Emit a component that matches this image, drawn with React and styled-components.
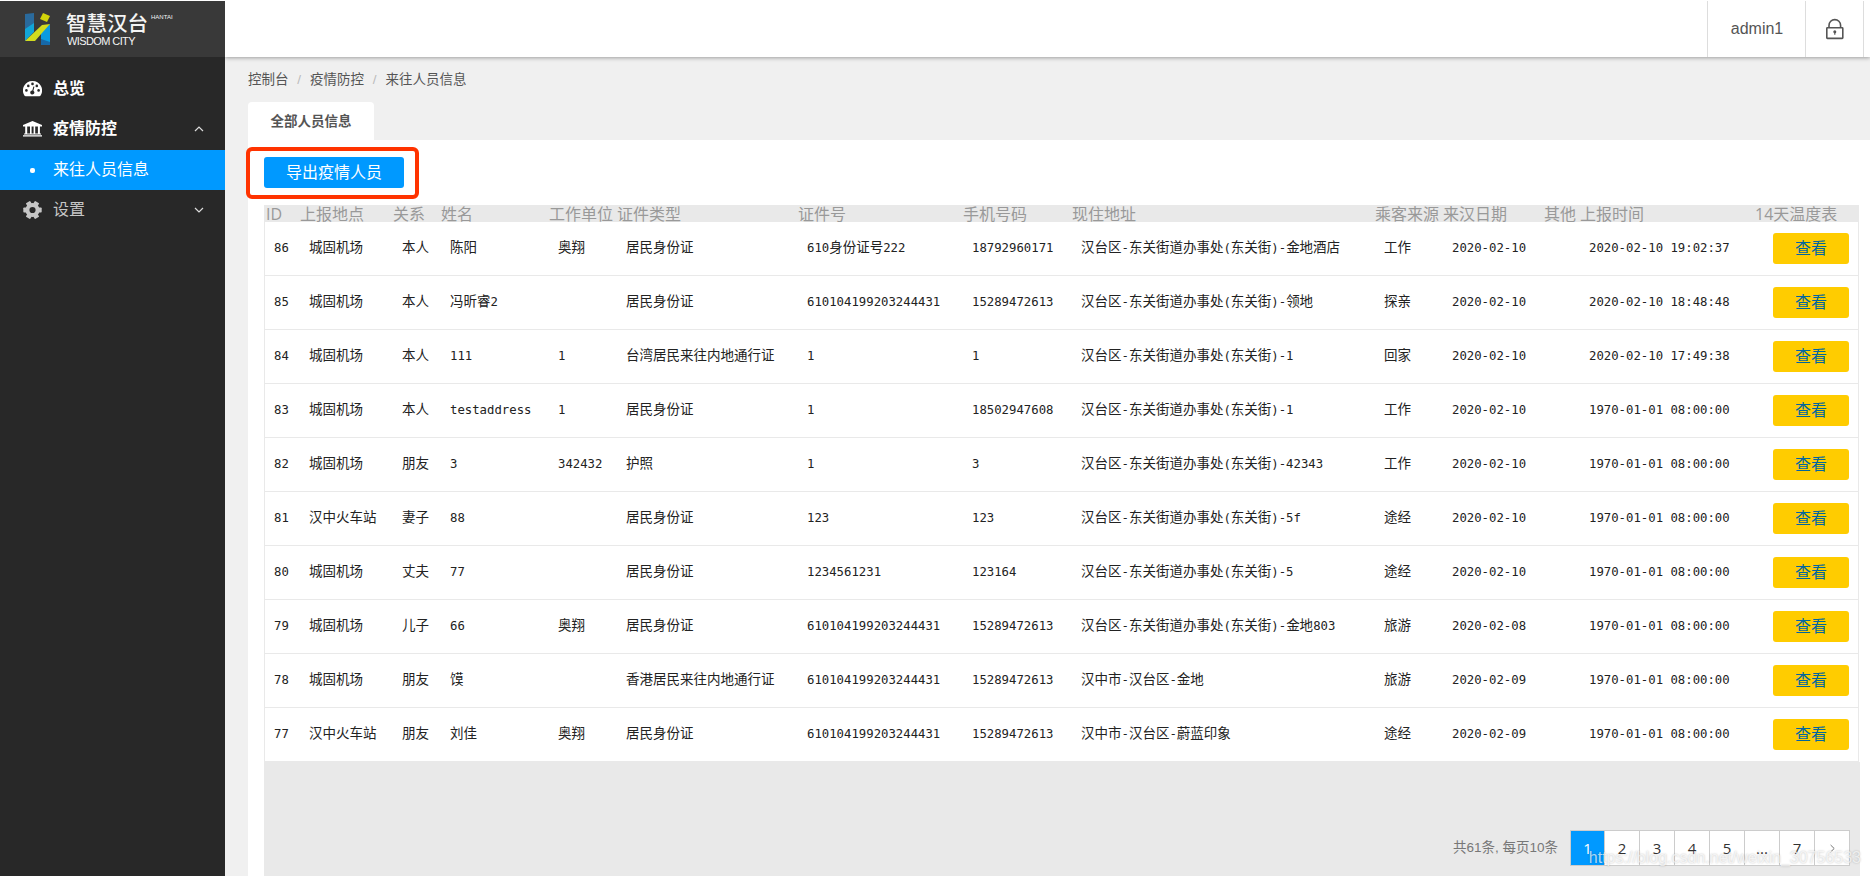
import React from "react";
import styled, { createGlobalStyle } from "styled-components";

const SANS = `"Liberation Sans", "Noto Sans CJK SC", sans-serif`;
const UI = `"Open Sans", "Noto Sans CJK SC", sans-serif`;

const GlobalStyle = createGlobalStyle`
  *, *::before, *::after { box-sizing: border-box; }
  html, body, #root { height: 100%; }
  body {
    margin: 0;
    background: #fff;
    color: #333;
    font-family: ${SANS};
    font-size: 13.5px;
    overflow: hidden;
  }
`;

const Page = styled.div`
  display: flex;
  width: 1870px;
  height: 876px;
  padding-top: 1px;
  overflow: hidden;
  position: relative;
`;

const Sidebar = styled.aside`
  flex: 0 0 225px;
  background: #282828;
`;

const Brand = styled.div`
  display: flex;
  align-items: flex-start;
  height: 56px;
  padding: 11px 0 0 24px;
  background: #393939;
  color: #f4f4f4;
`;

const BrandMark = styled.svg`
  width: 28px;
  height: 34px;
`;

const BrandText = styled.div`
  display: flex;
  flex-direction: column;
  margin-left: 14px;
`;

const BrandName = styled.div`
  display: flex;
  height: 22px;
  font-size: 20.5px;
  line-height: 24px;
  font-weight: 500;
`;

const BrandTag = styled.span`
  margin: 2px 0 0 3px;
  font-size: 6px;
  line-height: 6px;
  letter-spacing: 0;
`;

const BrandSub = styled.div`
  margin-left: 1px;
  font-size: 11px;
  line-height: 15px;
  letter-spacing: -0.6px;
  white-space: nowrap;
`;

const Menu = styled.nav`
  display: flex;
  flex-direction: column;
  padding-top: 12px;
`;

const MenuItem = styled.a`
  display: flex;
  align-items: center;
  height: 40px;
  margin-top: ${(p) => (p.$active ? 1 : 0)}px;
  padding: 0 21px 0 23px;
  font-size: 16px;
  font-weight: ${(p) => (p.$bold ? 700 : 400)};
  color: ${(p) => (p.$dim ? "#c6c6c6" : "#fff")};
  background: ${(p) => (p.$active ? "#0099ff" : "transparent")};
`;

const MenuIcon = styled.span`
  display: flex;
  justify-content: center;
  width: 19px;
  margin-right: 11px;
`;

const MenuLabel = styled.span`
  flex: 1;
  line-height: 20px;
`;

const Dot = styled.i`
  width: 5px;
  height: 5px;
  border-radius: 2px;
  background: #fff;
`;

const Main = styled.main`
  flex: 1;
  min-width: 0;
  display: flex;
  flex-direction: column;
  background: #f0f0f0;
`;

const TopBar = styled.header`
  flex: 0 0 56px;
  display: flex;
  justify-content: flex-end;
  padding-right: 6px;
  background: #fff;
  box-shadow: 0 1px 4px rgba(0, 0, 0, 0.35);
  clip-path: inset(0 0 -6px 0);
`;

const TopCell = styled.div`
  display: flex;
  align-items: center;
  justify-content: center;
  width: ${(p) => p.$w}px;
  padding-left: ${(p) => (p.$last ? 0 : 1)}px;
  border-left: 1px solid #ddd;
  border-right: ${(p) => (p.$last ? "1px solid #ddd" : "0")};
  color: #555;
  font-size: 16px;
`;

const Breadcrumb = styled.div`
  display: flex;
  align-items: center;
  height: 45px;
  padding-left: 23px;
  color: #555;
  span { line-height: 20px; }
  i {
    width: 21.5px;
    text-align: center;
    color: #bbb;
    font-style: normal;
  }
`;

const TabStrip = styled.div`
  padding-left: 23px;
  height: 38px;
`;

const Tab = styled.div`
  width: 126px;
  height: 38px;
  border-radius: 4px 4px 0 0;
  background: #fff;
  color: #555;
  font-weight: 700;
  line-height: 39px;
  text-align: center;
`;

const Panel = styled.section`
  flex: 1;
  display: flex;
  flex-direction: column;
  margin-left: 23px;
  padding: 7px 10px 0 0;
  background: #fff;
`;

const Highlight = styled.div`
  align-self: flex-start;
  width: 173px;
  height: 52px;
  margin: 0 0 6px -2px;
  padding: 6px 0 0 14px;
  border: 4px solid #ff3300;
  border-radius: 6px;
`;

const ExportButton = styled.button`
  display: block;
  width: 140px;
  height: 31px;
  padding: 0;
  border: 0;
  border-radius: 3px;
  background: #0099ff;
  color: #fff;
  font: 16px/31px ${UI};
`;

const GRID = "36px 93px 48px 108px 68px 181px 165px 109px 303px 68px 101px 36px 175px 1fr";

const TableHead = styled.div`
  display: grid;
  grid-template-columns: ${GRID};
  width: 1595px;
  height: 17px;
  margin-left: 16px;
  background: #e9e9e9;
  color: #999;
  font: 16px/18px ${UI};
  white-space: nowrap;
`;

const HeadCell = styled.div`
  &:first-child { padding-left: 2px; }
`;

const TableBody = styled.div`
  width: 1595px;
  margin-left: 16px;
  border: solid #e9e9e9;
  border-width: 0 1px;
`;

const Row = styled.div`
  display: grid;
  grid-template-columns: ${GRID};
  height: 54px;
  border-bottom: 1px solid #e9e9e9;
`;

const Cell = styled.div`
  padding: 16px 0 0 8px;
  line-height: 20px;
  color: #222;
  white-space: nowrap;
  &:first-child { padding-left: 9px; }
`;

const Mono = styled.span`
  font-family: "DejaVu Sans Mono", monospace;
  font-size: 12.3px;
`;

const ActionCell = styled.div`
  display: flex;
  justify-content: flex-end;
  padding: 11px 9px 0 0;
`;

const ViewButton = styled.button`
  width: 76px;
  height: 31px;
  padding: 0;
  border: 0;
  border-radius: 3px;
  background: #ffcc00;
  color: #01669f;
  font: 16px/31px ${UI};
`;

const Footer = styled.footer`
  flex: 1;
  display: flex;
  justify-content: flex-end;
  align-items: flex-start;
  width: 1596px;
  margin-left: 16px;
  padding: 68px 10px 0 0;
  background: #e9e9e9;
`;

const Summary = styled.span`
  margin-right: 12px;
  line-height: 35px;
  color: #777;
`;

const Pager = styled.div`
  display: flex;
  border: 1px solid #ccc;
`;

const PageItem = styled.a`
  display: flex;
  align-items: center;
  justify-content: center;
  width: ${(p) => (p.$active ? 33 : 35)}px;
  height: 34px;
  border-left: ${(p) => (p.$active ? "0" : "1px solid #ccc")};
  background: ${(p) => (p.$active ? "#0099ff" : "#fff")};
  color: ${(p) => (p.$active ? "#fff" : "#333")};
  font: 15px/34px ${UI};
`;

const Watermark = styled.div`
  position: absolute;
  right: 9px;
  bottom: 8px;
  font-size: 16px;
  line-height: 20px;
  white-space: nowrap;
  color: rgba(255, 255, 255, 0.7);
  text-shadow: 0 0 2px rgba(0, 0, 0, 0.25);
`;

const Gauge = () => (
  <svg width="19" height="16" viewBox="0 0 19 16">
    <path fill="#fff" d="M9.5 0A9.5 9.5 0 0 0 1.4 14.5Q1.8 15.3 2.7 15.3H16.3Q17.2 15.3 17.6 14.5A9.5 9.5 0 0 0 9.5 0Z" />
    <g fill="#282828">
      <circle cx="3.4" cy="9.4" r="1.3" />
      <circle cx="5.3" cy="4.9" r="1.3" />
      <circle cx="9.5" cy="2.9" r="1.3" />
      <circle cx="13.8" cy="4.9" r="1.3" />
      <circle cx="15.6" cy="9.4" r="1.3" />
      <path d="M10.4 5.4l1 .3-1 4a2.1 2.1 0 1 1-1.1-.3Z" />
    </g>
  </svg>
);

const Bank = () => (
  <svg width="19" height="16" viewBox="0 0 19 16" fill="#fff">
    <path d="M9.5 0 19 4V5.4H0V4ZM2.2 5.4H4.2V12.4H7V5.4H8.6V12.4H10.6V5.4H12.2V12.4H14.9V5.4H16.9V12.4H18V13.5H1V12.4H2.2ZM0 14.2H19V15.6H0Z" />
  </svg>
);

const Gear = () => (
  <svg width="19" height="18" viewBox="0 0 19 18">
    <circle cx="9.5" cy="9" r="5.1" fill="none" stroke="#c6c6c6" strokeWidth="4" />
    <g fill="#c6c6c6">
      {[30, 90, 150, 210, 270, 330].map((a) => (
        <rect key={a} x="7" y="-0.2" width="5" height="4" rx="0.8" transform={`rotate(${a} 9.5 9)`} />
      ))}
    </g>
  </svg>
);

const Chevron = ({ up }) => (
  <svg width="10" height="6" viewBox="0 0 10 6" fill="none" stroke="#ddd" strokeWidth="1.2">
    <path d={up ? "M1 5 5 1 9 5" : "M1 1 5 5 9 1"} />
  </svg>
);

const Lock = () => (
  <svg width="20" height="22" viewBox="0 0 20 22" fill="none" stroke="#555" strokeWidth="1.6">
    <rect x="1.8" y="9.8" width="16" height="10.6" rx="0.6" />
    <path d="M4 9.5V7.4a5.8 5.8 0 0 1 11.6 0V9.5" />
    <circle cx="9.8" cy="13.8" r="1.5" fill="#555" stroke="none" />
    <path d="M9.8 13.4v3.4" strokeWidth="1.2" />
  </svg>
);

const Next = () => (
  <svg width="5" height="9" viewBox="0 0 5 9" fill="none" stroke="#777" strokeWidth="1">
    <path d="M.6 1 4.2 4.5.6 8" />
  </svg>
);

const HEADERS = ["ID", "上报地点", "关系", "姓名", "工作单位", "证件类型", "证件号", "手机号码", "现住地址", "乘客来源", "来汉日期", "其他", "上报时间", "14天温度表"];

const OLD = "1970-01-01 08:00:00";
const LONG_ID = "610104199203244431";
const PHONE = "15289472613";
const STREET = "汉台区-东关街道办事处(东关街)-";

const ROWS = [
  ["86", "城固机场", "本人", "陈阳", "奥翔", "居民身份证", "610身份证号222", "18792960171", STREET + "金地酒店", "工作", "2020-02-10", "", "2020-02-10 19:02:37"],
  ["85", "城固机场", "本人", "冯昕睿2", "", "居民身份证", LONG_ID, PHONE, STREET + "领地", "探亲", "2020-02-10", "", "2020-02-10 18:48:48"],
  ["84", "城固机场", "本人", "111", "1", "台湾居民来往内地通行证", "1", "1", STREET + "1", "回家", "2020-02-10", "", "2020-02-10 17:49:38"],
  ["83", "城固机场", "本人", "testaddress", "1", "居民身份证", "1", "18502947608", STREET + "1", "工作", "2020-02-10", "", OLD],
  ["82", "城固机场", "朋友", "3", "342432", "护照", "1", "3", STREET + "42343", "工作", "2020-02-10", "", OLD],
  ["81", "汉中火车站", "妻子", "88", "", "居民身份证", "123", "123", STREET + "5f", "途经", "2020-02-10", "", OLD],
  ["80", "城固机场", "丈夫", "77", "", "居民身份证", "1234561231", "123164", STREET + "5", "途经", "2020-02-10", "", OLD],
  ["79", "城固机场", "儿子", "66", "奥翔", "居民身份证", LONG_ID, PHONE, STREET + "金地803", "旅游", "2020-02-08", "", OLD],
  ["78", "城固机场", "朋友", "馍", "", "香港居民来往内地通行证", LONG_ID, PHONE, "汉中市-汉台区-金地", "旅游", "2020-02-09", "", OLD],
  ["77", "汉中火车站", "朋友", "刘佳", "奥翔", "居民身份证", LONG_ID, PHONE, "汉中市-汉台区-蔚蓝印象", "途经", "2020-02-09", "", OLD],
];

// Latin runs are monospaced; Chinese runs keep the regular face.
const MixedText = ({ text }) =>
  text
    .split(/([\x20-\x7e]+)/)
    .filter(Boolean)
    .map((part, i) => (/^[\x20-\x7e]/.test(part) ? <Mono key={i}>{part}</Mono> : <span key={i}>{part}</span>));

const PAGES = ["1", "2", "3", "4", "5", "...", "7"];

export default function App() {
  return (
    <Page>
      <GlobalStyle />
      <Sidebar>
        <Brand>
          <BrandMark viewBox="0 0 28 34">
            <path fill="#2a6a9c" d="M1 2 10 1V17L1 29Z" />
            <path fill="#11a5d8" d="M1 17 10 11V20L1 29Z" />
            <path fill="#0b9be0" d="M17 19 26 12V33H17Z" />
            <path fill="#1668a8" d="M17 27 26 30V33H17Z" />
            <path fill="#d2dc1e" d="M26 12 18 13 1 29H11L18 21Z" />
            <path fill="#d2d40a" d="M19 1 26 4 23 10 16 7Z" />
          </BrandMark>
          <BrandText>
            <BrandName>智慧汉台<BrandTag>HANTAI</BrandTag></BrandName>
            <BrandSub>WISDOM CITY</BrandSub>
          </BrandText>
        </Brand>
        <Menu>
          <MenuItem $bold><MenuIcon><Gauge /></MenuIcon><MenuLabel>总览</MenuLabel></MenuItem>
          <MenuItem $bold><MenuIcon><Bank /></MenuIcon><MenuLabel>疫情防控</MenuLabel><Chevron up /></MenuItem>
          <MenuItem $active><MenuIcon><Dot /></MenuIcon><MenuLabel>来往人员信息</MenuLabel></MenuItem>
          <MenuItem $dim><MenuIcon><Gear /></MenuIcon><MenuLabel>设置</MenuLabel><Chevron /></MenuItem>
        </Menu>
      </Sidebar>
      <Main>
        <TopBar>
          <TopCell $w={98}>admin1</TopCell>
          <TopCell $w={59} $last><Lock /></TopCell>
        </TopBar>
        <Breadcrumb>
          <span>控制台</span><i>/</i><span>疫情防控</span><i>/</i><span>来往人员信息</span>
        </Breadcrumb>
        <TabStrip><Tab>全部人员信息</Tab></TabStrip>
        <Panel>
          <Highlight><ExportButton>导出疫情人员</ExportButton></Highlight>
          <TableHead>{HEADERS.map((h) => <HeadCell key={h}>{h}</HeadCell>)}</TableHead>
          <TableBody>
            {ROWS.map((row) => (
              <Row key={row[0]}>
                {row.map((text, i) => <Cell key={i}><MixedText text={text} /></Cell>)}
                <ActionCell><ViewButton>查看</ViewButton></ActionCell>
              </Row>
            ))}
          </TableBody>
          <Footer>
            <Summary>共61条, 每页10条</Summary>
            <Pager>
              {PAGES.map((p, i) => <PageItem key={p} $active={i === 0}>{p}</PageItem>)}
              <PageItem><Next /></PageItem>
            </Pager>
          </Footer>
        </Panel>
      </Main>
      <Watermark>https://blog.csdn.net/weixin_30756533</Watermark>
    </Page>
  );
}
